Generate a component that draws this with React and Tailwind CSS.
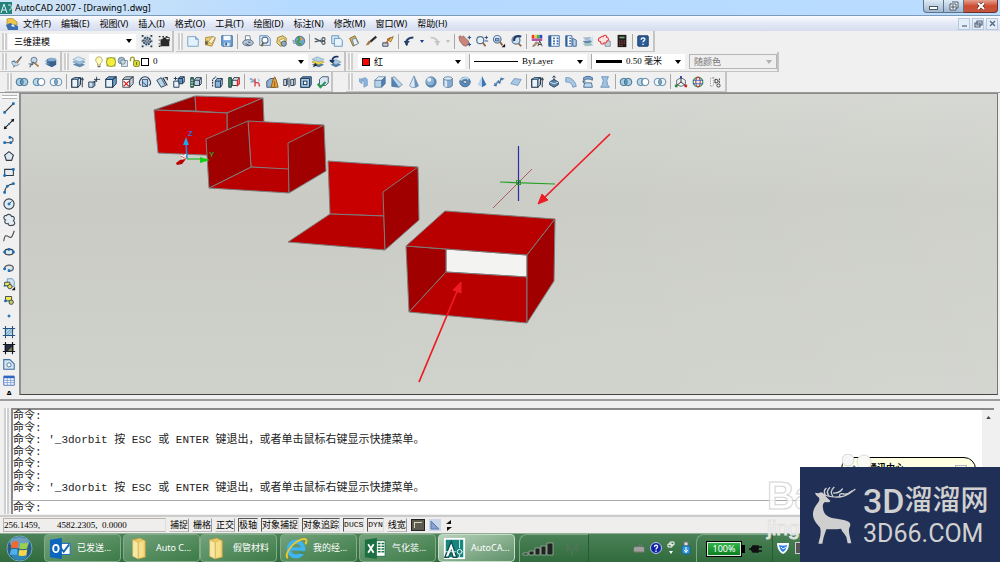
import React, { useState } from "react";

const ICONS = {
  // standard toolbar
  gear: (
    <>
      <rect x="1" y="1" width="14" height="14" fill="#dfe6ee" />
      <path d="M2 2h2M12 2h2M2 14h2M12 14h2M2 8h1M13 8h1" stroke="#333" strokeWidth="2" />
      <circle cx="8" cy="8" r="4" fill="#9fb4c8" stroke="#2c3e50" strokeWidth="2" strokeDasharray="2 1" />
      <circle cx="8" cy="8" r="1.5" fill="#fff" stroke="#2c3e50" />
    </>
  ),
  gearDark: (
    <>
      <path d="M2 3h2M6 3h2M10 3h2M2 7h1M2 11h1M2 14h2" stroke="#333" strokeWidth="1.5" />
      <path d="M4 6h2l1-2h3l1 2h3v8H4z" fill="#2a2a2a" />
      <path d="M10 4h4v4" stroke="#333" fill="none" />
    </>
  ),
  page: (
    <>
      <path d="M2 3h9l3 3v8H2z" fill="#e3f2fc" stroke="#6f9cc4" />
      <path d="M11 3v3h3" fill="#a9cbe6" stroke="#6f9cc4" />
    </>
  ),
  open: (
    <>
      <path d="M3 4l8-1 3 2-4 9-7-2z" fill="#f2cf6c" stroke="#a1803b" />
      <path d="M6 9l5-6 3 1-4 7z" fill="#fff3c4" stroke="#8c7b50" strokeWidth=".7" />
      <path d="M2 9l3-2 1 4-3 2z" fill="#7c6840" />
    </>
  ),
  save: (
    <>
      <path d="M2 2h12v12H3l-1-1z" fill="#6fa6dc" stroke="#355e90" />
      <path d="M4 2h8v5H4z" fill="#f6fbff" />
      <path d="M5 10h6v4H5z" fill="#dbe9f6" />
      <path d="M6 10h2v3H6z" fill="#355e90" />
    </>
  ),
  print: (
    <>
      <path d="M5 7V2h5l1 5" fill="#fff" stroke="#66798f" />
      <ellipse cx="8" cy="10" rx="6" ry="3.5" fill="#b8c8d9" stroke="#4d6078" />
      <path d="M5 11l5 2M8 9l3 1" stroke="#3d5069" />
    </>
  ),
  preview: (
    <>
      <path d="M2 2h9l3 3v8H2z" fill="#dfeefa" stroke="#5c84ae" />
      <circle cx="8" cy="7" r="3.5" fill="#fff" stroke="#557292" strokeWidth="1.3" />
      <path d="M6 10l-2 4" stroke="#8a5a2b" strokeWidth="2" />
    </>
  ),
  publish: (
    <>
      <path d="M3 4l6-2 4 3-1 7-6 2-4-4z" fill="#ecd27a" stroke="#927b36" />
      <path d="M5 7l5-2 2 4-5 2z" fill="#fff7d7" stroke="#927b36" strokeWidth=".7" />
      <circle cx="10" cy="11" r="3" fill="#95a7bb" stroke="#465b73" />
    </>
  ),
  globe: (
    <>
      <circle cx="9" cy="8" r="5.5" fill="#6aa5d2" stroke="#4c6c8a" />
      <path d="M6 4c3-1 3 3 1 4s1 4 4 4" stroke="#4a9b4f" strokeWidth="2.5" fill="none" />
      <path d="M9 3l4 3-3 2z" fill="#e5964a" />
      <path d="M1 7l4 3-3 1z" fill="#c9d7e4" stroke="#5b7590" strokeWidth=".7" />
    </>
  ),
  cut: (
    <>
      <path d="M2 5l8 4M2 9l8-2" stroke="#4c5a66" strokeWidth="1.4" />
      <circle cx="12" cy="6" r="1.8" fill="none" stroke="#4a5560" strokeWidth="1.3" />
      <circle cx="12" cy="10" r="1.8" fill="none" stroke="#4a5560" strokeWidth="1.3" />
    </>
  ),
  copy: (
    <>
      <path d="M2 2h8v9H2z" fill="#d6eaf8" stroke="#5c8fb6" />
      <path d="M5 5h7l2 2v7H5z" fill="#e9f5fd" stroke="#5c8fb6" />
    </>
  ),
  paste: (
    <>
      <path d="M3 5l6-3 4 8-6 4z" fill="#d9b45a" stroke="#7d642c" />
      <path d="M6 6l4-1 3 6-5 2z" fill="#eef6fc" stroke="#5f7f9c" />
    </>
  ),
  match: (
    <>
      <path d="M14 3l-7 6" stroke="#2b2b2b" strokeWidth="2.4" />
      <path d="M8 8l-2 4-4 1 3-5z" fill="#a27545" />
    </>
  ),
  block: (
    <>
      <path d="M7 6l7-3-3 6z" fill="#ffd84b" stroke="#7c6523" />
      <path d="M2 10h6v4H2z" fill="#c2cfdd" stroke="#33435a" />
      <path d="M5 11l6-7" stroke="#c2541d" strokeWidth="1.4" />
    </>
  ),
  undo: (
    <>
      <path d="M6 13C3 9 6 4 13 4" fill="none" stroke="#27426f" strokeWidth="2.4" />
      <path d="M2 8l7 0-4 5z" fill="#27426f" />
    </>
  ),
  redo: (
    <>
      <path d="M10 13c3-4 0-9-7-9" fill="none" stroke="#c7c7c7" strokeWidth="2" />
      <path d="M14 8l-7 0 4 5z" fill="#c7c7c7" />
    </>
  ),
  pan: (
    <>
      <path d="M1 3l2-1 2 2 1-2 2 2 1 1 3 3v4l-3 2-3-1-4-5z" fill="#c98579" stroke="#96594e" strokeWidth=".8" />
      <path d="M13 2v4M11 4h4M11 12h4M13 10v4" stroke="#30568f" strokeWidth="1.3" />
    </>
  ),
  zoomRt: (
    <>
      <circle cx="6" cy="7" r="4" fill="#e5f2fb" stroke="#577592" strokeWidth="1.4" />
      <path d="M9 10l3 4" stroke="#8c6235" strokeWidth="2" />
      <path d="M13 2v4M11 4h4M11 8h4" stroke="#24456f" />
    </>
  ),
  zoomWin: (
    <>
      <circle cx="6" cy="6" r="4.3" fill="#e5f2fb" stroke="#577592" strokeWidth="1.4" />
      <path d="M4 5h4v3H4z" fill="#8db4d8" stroke="#30568f" />
      <path d="M9 9l3 4" stroke="#8c6235" strokeWidth="2" />
      <path d="M15 11v4h-4z" fill="#111" />
    </>
  ),
  zoomPrev: (
    <>
      <circle cx="8" cy="7" r="4.5" fill="#cfe2f2" stroke="#577592" strokeWidth="1.4" />
      <path d="M14 3C9 1 5 4 6 8" stroke="#1d3666" strokeWidth="2.4" fill="none" />
      <path d="M11 11l3 3" stroke="#8c6235" strokeWidth="2" />
    </>
  ),
  props: (
    <>
      <path d="M2 1h3v4H2z" fill="#e33" />
      <path d="M5 1h3v4H5z" fill="#ec3" />
      <path d="M8 1h3v4H8z" fill="#3b5" />
      <path d="M11 1h3v4h-3z" fill="#34c" />
      <path d="M2 5h12v3H2z" fill="#b455a0" />
      <path d="M3 14l4-5 2 1-4 4z" fill="#d99e78" stroke="#6a4a33" strokeWidth=".7" />
      <path d="M9 14l2-6 3 6M10 12h3" stroke="#333" fill="none" />
    </>
  ),
  design: (
    <>
      <path d="M2 2h12v12H2z" fill="#fff" stroke="#2f5f9e" />
      <path d="M2 2h3v12H2z" fill="#2f5f9e" />
      <path d="M7 5h2M11 5h2M7 8h2M11 8h2M7 11h2M11 11h2" stroke="#3a6cae" strokeWidth="2" />
    </>
  ),
  palette: (
    <>
      <path d="M2 2h7v12H2z" fill="#fff" stroke="#2f5f9e" />
      <path d="M2 2h2v12H2z" fill="#2f5f9e" />
      <path d="M6 5h2M6 8h2M6 11h2" stroke="#3a6cae" strokeWidth="1.6" />
      <path d="M10 5l4 2v7h-4z" fill="#b7cbe0" stroke="#2f5f9e" />
    </>
  ),
  sheets: (
    <>
      <path d="M2 4l9-1 3 3-9 1z" fill="#a5bdd2" />
      <path d="M2 8l9-1 3 2-9 2z" fill="#5c88ae" />
      <path d="M2 11l9-1 3 3-9 1z" fill="#9fc3bd" />
      <path d="M10 4l4-2v11" fill="#d5e1ea" />
    </>
  ),
  markup: (
    <>
      <path d="M8 8h6v6H8z" fill="#c8d2dd" stroke="#7d8da1" />
      <path d="M3 4a2 2 0 013-1 2 2 0 014 1 2 2 0 010 4 2 2 0 01-3 2 2 2 0 01-4-1 2 2 0 010-5z" fill="#fbe3e3" stroke="#e23b3b" strokeWidth="1.2" />
    </>
  ),
  calc: (
    <>
      <path d="M3 1h10v14H3z" fill="#1c1c1c" />
      <path d="M5 3h6v2H5z" fill="#77a377" />
      <path d="M5 8h1M7.500 8h1M10 8h1M5 10.500h1M7.500 10.500h1M10 10.500h1M5 13h1M7.500 13h1" stroke="#e35b5b" strokeWidth="1.300" />
    </>
  ),
  help: (
    <>
      <rect x="2" y="2" width="12" height="12" rx="1" fill="#2a5c97" stroke="#16365f" />
      <path d="M6 6.500c0-3 4.500-2.500 4 0-.3 1.200-2 1.300-2 3M8 11v1.500" stroke="#fff" strokeWidth="1.600" fill="none" />
    </>
  ),
  // layers
  penTick: (
    <>
      <path d="M2 8l3-1 2 3 6-8" fill="none" stroke="#5f7fa2" strokeWidth="1.600" />
      <path d="M13 2l-6 9-3 3 1-4z" fill="#dd9b5c" stroke="#5a4634" strokeWidth=".6" />
      <path d="M2 8c0 5 6 6 9 2" fill="#c3d9ec" stroke="#5f7fa2" strokeWidth=".8" />
    </>
  ),
  walk: (
    <>
      <circle cx="8" cy="6" r="3.500" fill="#c4d7e7" stroke="#5d7388" />
      <path d="M3 14l4-6 6 5M2 10l5 1" stroke="#526475" fill="none" strokeWidth="1.300" />
      <path d="M9 9l4 4" stroke="#bb8446" strokeWidth="1.800" />
    </>
  ),
  cylinderDark: (
    <>
      <path d="M3 5l5-2 6 2v6l-5 3-6-3z" fill="#39628d" />
      <path d="M1 7h5M1 10h5" stroke="#7aa7cf" />
      <ellipse cx="9" cy="5" rx="5" ry="2" fill="#87acd0" />
    </>
  ),
  layers: (
    <>
      <path d="M1 11l6-3 8 3-6 3z" fill="#5c88ae" />
      <path d="M1 8l6-3 8 3-6 3z" fill="#9ec3de" stroke="#5b83a8" strokeWidth=".6" />
      <path d="M1 5l6-3 8 3-6 3z" fill="#d2e6f3" stroke="#7196b5" strokeWidth=".6" />
    </>
  ),
  layersY: (
    <>
      <path d="M1 11l6-3 8 3-6 3z" fill="#4f7ca6" />
      <path d="M1 8l6-3 8 3-6 3z" fill="#f4d84a" stroke="#a18a23" strokeWidth=".6" />
      <path d="M1 5l6-3 8 3-6 3z" fill="#b5d0e6" stroke="#7196b5" strokeWidth=".6" />
      <path d="M2 14l3-5 2 3z" fill="#222" />
    </>
  ),
  layersPrev: (
    <>
      <path d="M3 11l6-3 6 3-6 3z" fill="#4f7ca6" />
      <path d="M3 8l6-3 6 3-6 3z" fill="#a9c8de" stroke="#5b83a8" strokeWidth=".6" />
      <path d="M12 2C7 1 4 4 5 8L2 6M5 8l2-2" stroke="#1d3666" strokeWidth="2" fill="none" />
    </>
  ),
  bulb: (
    <>
      <path d="M8 1a4.500 4.500 0 00-2 8.500V12h4V9.500A4.500 4.500 0 008 1z" fill="#fffbbf" stroke="#a59a35" />
      <path d="M6 13h4v2H6z" fill="#666" />
    </>
  ),
  sun: (
    <>
      <path d="M2 2h12v12H2z" fill="#9fb24c" />
      <circle cx="8" cy="8" r="6" fill="#f5ee3b" stroke="#7f8a31" />
    </>
  ),
  sunVp: (
    <>
      <path d="M6 6h8v8H6z" fill="#dfe8ef" stroke="#6b8195" />
      <circle cx="6" cy="6" r="4.500" fill="#a5bccc" stroke="#5f7688" />
      <circle cx="8" cy="8" r="3" fill="#cfdbe4" stroke="#5f7688" />
    </>
  ),
  unlock: (
    <>
      <path d="M2 7V4a2.500 2.500 0 015 0v4" fill="none" stroke="#9a9a25" strokeWidth="1.800" />
      <rect x="6" y="6" width="8" height="8" rx="2" fill="#d6d83a" stroke="#78791d" />
      <path d="M10 8v4" stroke="#55560f" />
    </>
  ),
  // solids editing
  union: (
    <>
      <circle cx="5.500" cy="8" r="4.200" fill="#a9cde0" stroke="#35658c" />
      <circle cx="10.500" cy="8" r="4.200" fill="#a9cde0" stroke="#35658c" />
      <path d="M8 5a4 4 0 010 6 4 4 0 010-6" fill="#79aecb" stroke="#35658c" />
    </>
  ),
  subtract: (
    <>
      <circle cx="5.500" cy="8" r="4.200" fill="#b9d9ea" stroke="#45759b" />
      <circle cx="10.500" cy="8" r="4.200" fill="#fff" stroke="#45759b" />
      <path d="M8 5a4 4 0 000 6" fill="none" stroke="#45759b" />
    </>
  ),
  intersect: (
    <>
      <circle cx="5.500" cy="8" r="4.200" fill="#f2f7fa" stroke="#4f7fa4" />
      <circle cx="10.500" cy="8" r="4.200" fill="none" stroke="#4f7fa4" />
      <path d="M8 5a4 4 0 010 6 4 4 0 010-6" fill="#8fc0da" stroke="#4f7fa4" />
    </>
  ),
  extrude: (
    <>
      <path d="M2 5h7v9H2z" fill="#e9f3fb" stroke="#16283c" strokeWidth="1.300" />
      <path d="M2 5l3-2h7L9 5M9 14l3-3V3" fill="#7fb0d9" stroke="#16283c" />
      <path d="M14 14V4M12.500 6L14 3l1.500 3" stroke="#16283c" fill="none" />
    </>
  ),
  moveFace: (
    <>
      <path d="M2 8h5v6H2z" fill="#cfe0ee" stroke="#203449" />
      <path d="M7 8l2-1v5l-2 2" fill="#6e9fca" stroke="#203449" />
      <path d="M8 9l3-4M11 2v6M8 5h7" stroke="#203449" fill="none" />
    </>
  ),
  box: (
    <>
      <path d="M2 5h8v9H2z" fill="#e6f1fa" stroke="#19304a" strokeWidth="1.200" />
      <path d="M2 5l3-3h9l-4 3zM10 14V5l4-3v8z" fill="#6d9fcf" stroke="#19304a" />
    </>
  ),
  boxX: (
    <>
      <path d="M2 5h8v9H2z" fill="#fff" stroke="#35434f" />
      <path d="M2 5l3-3h9l-4 3zM10 14V5l4-3v8z" fill="#c2cfda" stroke="#35434f" />
      <path d="M3 7l6 6M9 7l-6 6" stroke="#d91f1f" strokeWidth="1.500" />
    </>
  ),
  boxRotate: (
    <>
      <path d="M5 5h6v8H5z" fill="#b6d2ea" stroke="#274766" />
      <path d="M3 5c2-4 8-4 10 0M3 12c-2-2-2-4 0-7M13 12c2-2 2-4 0-7" fill="none" stroke="#274766" strokeWidth="1.300" />
      <path d="M5 8l6 5" stroke="#274766" />
    </>
  ),
  taper: (
    <>
      <path d="M2 6l5-3 5 9-5 2z" fill="#b8d2e8" stroke="#22384d" />
      <path d="M9 3l5 9M11 3h3v3" stroke="#22384d" fill="none" strokeWidth="1.300" />
    </>
  ),
  copyFace: (
    <>
      <path d="M2 7h6v7H2z" fill="#e6f1fa" stroke="#19304a" />
      <path d="M7 4h5v6H8V7H7zM7 4l2-2h5l-2 2M12 10l2-2V2" fill="#6496c4" stroke="#19304a" />
      <path d="M2 4h4M4 2v4" stroke="#19304a" />
    </>
  ),
  colorFace: (
    <>
      <path d="M2 3h3v11H2z" fill="#2d9c55" stroke="#1c2d3e" />
      <path d="M6 6h6v6H6zM6 6l2-3h6l-2 3M12 12l2-2V3" fill="#bcd0e2" stroke="#1c2d3e" />
      <path d="M2 6h3M2 9h3M2 12h3" stroke="#fff" strokeWidth=".7" />
    </>
  ),
  copyEdge: (
    <>
      <path d="M6 7h6v7H6zM6 7l2-3h6l-2 3M12 14l2-3V4" fill="#8ab4dc" stroke="#19304a" />
      <path d="M3 13V5l4-3" stroke="#19304a" fill="none" strokeWidth="1.300" strokeDasharray="2 1" />
    </>
  ),
  colorEdge: (
    <>
      <path d="M2 3h3v11H2z" fill="#37a45d" stroke="#1c2d3e" />
      <path d="M6 6h6v6H6zM6 6l2-3h6l-2 3" fill="#e2ecf5" stroke="#1c2d3e" />
      <path d="M12 6v6l2-2V3" stroke="#dc2626" strokeWidth="1.500" fill="none" />
    </>
  ),
  imprint: (
    <>
      <path d="M2 4l6 3M3 8l5-1" stroke="#8aa9c8" strokeWidth="2" />
      <path d="M8 4v9M8 9c4-1 5 0 5 4" stroke="#d53c3c" strokeWidth="1.500" fill="none" />
      <path d="M11 3l3 3-2 2" fill="#a8c9e7" />
    </>
  ),
  clean: (
    <>
      <path d="M2 14V7l4-3h6v10z" fill="#93b1cc" stroke="#3b5671" />
      <path d="M7 14l2-8 2-4 2 4 2 8z" fill="#e8a23d" stroke="#865315" />
      <path d="M11 7v6" stroke="#865315" />
    </>
  ),
  separate: (
    <>
      <path d="M2 5h3v7H2zM5 12l1-1V4L5 5" fill="#dbe8f3" stroke="#1d2f42" />
      <path d="M10 5h3v7h-3zM13 12l2-1V4l-2 1" fill="#dbe8f3" stroke="#1d2f42" />
      <path d="M8 3v11" stroke="#1d2f42" />
    </>
  ),
  shell: (
    <>
      <path d="M2 4l2-2h10v9l-2 3H2z" fill="#5e93c4" stroke="#19304a" />
      <path d="M2 4h10v10H2z" fill="#a5c8e4" stroke="#19304a" />
      <rect x="5" y="7" width="4" height="4" fill="#eef6fc" stroke="#19304a" />
    </>
  ),
  check: (
    <>
      <path d="M4 5l3-3h7v7l-3 3H4z" fill="#d8e7f3" stroke="#35506b" />
      <path d="M2 10l3 4 6-6" stroke="#2b9954" strokeWidth="2.400" fill="none" />
    </>
  ),
  // modeling
  polysolid: <path d="M4 4l3 1v5L4 8zM7 4l4-1 2 2v7l-4 2V7L7 6z" fill="#8ab3dc" stroke="#6b94be" strokeWidth=".7" />,
  cube: (
    <>
      <path d="M2 6h8v8H2z" fill="#b7d0e6" stroke="#54779b" strokeWidth=".8" />
      <path d="M2 6l4-4h8l-4 4z" fill="#e0edf7" stroke="#54779b" strokeWidth=".8" />
      <path d="M10 14V6l4-4v8z" fill="#4c7fb2" stroke="#54779b" strokeWidth=".8" />
    </>
  ),
  wedge: (
    <>
      <path d="M2 13V3l8 11z" fill="#4f82b4" stroke="#54779b" strokeWidth=".8" />
      <path d="M2 3l3-1 9 9-4 3z" fill="#c0d7eb" stroke="#54779b" strokeWidth=".8" />
    </>
  ),
  cone: (
    <>
      <path d="M8 1l5 11c-1 3-9 3-10 0z" fill="#dceaf5" stroke="#5c7c9b" strokeWidth=".8" />
      <path d="M8 1l5 11c0 1-2 2-4 2z" fill="#6893bc" />
    </>
  ),
  sphere: (
    <>
      <circle cx="8" cy="8" r="6" fill="#5d8bb9" stroke="#44698f" strokeWidth=".6" />
      <circle cx="7" cy="7" r="4.500" fill="#8db1d3" />
      <circle cx="6" cy="5.500" r="2.300" fill="#e2eef8" />
    </>
  ),
  cyl: (
    <>
      <path d="M3 4v8c1 3 9 3 10 0V4z" fill="#86abd0" stroke="#44698f" strokeWidth=".8" />
      <path d="M4 5h3v9l-3-1z" fill="#d9e7f3" />
      <ellipse cx="8" cy="4" rx="5" ry="2" fill="#dceaf6" stroke="#44698f" strokeWidth=".8" />
    </>
  ),
  torus: (
    <>
      <ellipse cx="8" cy="8" rx="6" ry="5.500" fill="#5d8bb9" stroke="#44698f" />
      <path d="M3 6c2-3 7-4 9-1" stroke="#c7dcee" strokeWidth="2" fill="none" />
      <ellipse cx="8" cy="8" rx="2.500" ry="1.500" fill="#eef3f7" stroke="#33587e" />
    </>
  ),
  pyramid: (
    <>
      <path d="M8 1L3 11l5 3z" fill="#b9d5ed" />
      <path d="M8 1l5 10-5 3z" fill="#3d74ae" />
    </>
  ),
  helix: <path d="M2 12l3-1 1-3 3 1 1-4 4-1M3 9l2 4M7 6l2 4M10 3l2 3" stroke="#4577ad" strokeWidth="1.400" fill="none" />,
  plane: <path d="M6 4l8 1-4 7-8-2z" fill="#a9c6e2" stroke="#5f88b1" strokeWidth=".8" />,
  pressPull: (
    <>
      <path d="M8 1v5M3 8l5-3 5 3v3l-5 3-5-3z" fill="#5a83ac" stroke="#263f59" />
      <path d="M3 8l5 2 5-2" fill="none" stroke="#dbe9f5" />
      <path d="M6 3l2-2 2 2" stroke="#263f59" fill="none" />
    </>
  ),
  sweep: <path d="M2 3c6-1 11 4 12 10l-4 1C9 9 6 8 2 8z" fill="#a8c6e3" stroke="#5d86b0" strokeWidth=".8" />,
  revolve: (
    <>
      <path d="M3 3c3-2 7-2 10 0v3c-3-2-7-2-10 0z" fill="#84abd2" stroke="#3f6890" />
      <path d="M4 9h8l1 5H3z" fill="#c1d7ec" stroke="#3f6890" />
      <path d="M5 7l-3 0 2 3" fill="none" stroke="#1f4166" />
    </>
  ),
  loft: <path d="M4 2h8l-2 4 1 5 2 3H3l2-3 1-5z" fill="#9fc1e2" stroke="#6a92bb" />,
  ucs: (
    <>
      <path d="M3 6l5-3 5 3v5l-5 2-5-2z" fill="none" stroke="#58626c" />
      <path d="M8 8V2M8 8l-5 4M8 8l5 4" stroke="#222" />
      <path d="M7 1h2v3H7z" fill="#1f3fb0" />
      <path d="M1 11h3v3H1z" fill="#1b8f36" />
      <path d="M12 11h3v3h-3z" fill="#cc2222" />
    </>
  ),
  orbit: (
    <>
      <circle cx="8" cy="8" r="5.500" fill="none" stroke="#2a9657" strokeWidth="1.300" />
      <ellipse cx="8" cy="8" rx="2.500" ry="5.500" fill="none" stroke="#c93434" strokeWidth="1.200" />
      <path d="M2 6h12M2 10h12" stroke="#2d5fb7" />
    </>
  ),
  views: (
    <>
      <path d="M3 4l3-1v9l-3 1zM6 3h2" fill="#fff" stroke="#777" strokeDasharray="1 1" />
      <path d="M8 5h2c2 0 2 4 0 4H8z" fill="none" stroke="#222" />
      <circle cx="12" cy="12" r="1.800" fill="#fff" stroke="#222" />
      <path d="M13 4v5" stroke="#222" strokeDasharray="2 1" />
    </>
  ),
  // draw toolbar
  line: (
    <>
      <path d="M3 13L13 3" stroke="#333" strokeWidth="1.200" />
      <path d="M2 12h2v2H2zM12 2h2v2h-2z" fill="#1c6fb5" stroke="#1c6fb5" />
    </>
  ),
  xline: (
    <>
      <path d="M3 13L13 3" stroke="#222" strokeWidth="1.200" />
      <path d="M2 14l1-4 3 3zM14 2l-4 1 3 3z" fill="#111" />
      <path d="M7 7h2v2H7z" fill="#1c6fb5" />
    </>
  ),
  pline: (
    <>
      <path d="M3 11h7c4-1 3-6 0-6" stroke="#666" strokeWidth="1.400" fill="none" />
      <path d="M2 10h2v2H2zM9 10h2v2H9zM8 4h2v2H8z" fill="#1c6fb5" stroke="#1c6fb5" />
    </>
  ),
  polygon: <path d="M8 3l5 4-2 6H5L3 7z" fill="#dce8f2" stroke="#333b45" strokeWidth="1.300" />,
  rect: (
    <>
      <path d="M3 5h10v7H3z" fill="#e3edf5" stroke="#333b45" strokeWidth="1.200" />
      <path d="M2 11h2v2H2zM12 4h2v2h-2z" fill="#1c6fb5" stroke="#1c6fb5" />
    </>
  ),
  arc: (
    <>
      <path d="M3 13c0-5 4-9 10-10" stroke="#333" strokeWidth="1.300" fill="none" />
      <path d="M2 12h2v2H2zM5 5h2v2H5zM12 2h2v2h-2z" fill="#1c6fb5" stroke="#1c6fb5" />
    </>
  ),
  circle: (
    <>
      <circle cx="8" cy="8" r="5.800" fill="#e1ecf5" stroke="#3a4149" strokeWidth="1.300" />
      <path d="M8 8l3-3" stroke="#333" />
      <circle cx="8" cy="8" r="1.700" fill="#1c7fc5" />
    </>
  ),
  cloud: (
    <path
      d="M4 8C1 7 2 2 5 3c1-2 5-2 6 1 3-1 4 3 2 5 3 2 1 6-2 5-2 1-4 0-4-2-3 1-5-2-3-4z"
      fill="#e4eef6"
      stroke="#43494f"
      strokeWidth="1.300"
    />
  ),
  spline: <path d="M2 14c1-8 3-7 6-5s4-1 6-7" stroke="#444" strokeWidth="1.200" fill="none" />,
  ellipse: (
    <>
      <ellipse cx="8" cy="8" rx="5" ry="3.300" fill="#dbe9f4" stroke="#333" strokeWidth="1.300" />
      <path d="M2 7h2v2H2zM12 7h2v2h-2zM7 4h2v2H7z" fill="#1c6fb5" stroke="#1c6fb5" />
    </>
  ),
  ellArc: (
    <>
      <path d="M3 9c-1-5 10-6 10-1 0 3-4 4-5 3" stroke="#555" strokeWidth="1.400" fill="#dce7f0" />
      <path d="M2 8h2v2H2zM7 10h2v2H7z" fill="#1c6fb5" stroke="#1c6fb5" />
    </>
  ),
  insert: (
    <>
      <path d="M6 2h6l2 3v6H6z" fill="#cfe3f1" stroke="#6d94b5" />
      <path d="M3 6h6v4H3z" fill="#efe95a" stroke="#333b45" />
      <circle cx="9" cy="11" r="2.500" fill="#e6df50" stroke="#333b45" />
      <path d="M15 11v4h-4z" fill="#111" />
      <path d="M2 9h2v2H2z" fill="#1c6fb5" />
    </>
  ),
  makeBlock: (
    <>
      <path d="M4 4h7v5H4z" fill="#efe95a" stroke="#333b45" />
      <circle cx="10.500" cy="10.500" r="2.500" fill="#c5cf60" stroke="#333b45" />
      <path d="M3 8h2v2H3z" fill="#1c6fb5" stroke="#1c6fb5" />
    </>
  ),
  point: <path d="M7 7h2v2H7z" fill="#1c6fb5" stroke="#1c6fb5" />,
  hatch: (
    <>
      <path d="M3 4h10v8H3z" fill="#b9d5ea" />
      <path d="M3 12L11 4M6 12l7-7M3 8l4-4" stroke="#4d86b4" strokeWidth=".8" />
      <path d="M4 1v14M12 1v14M1 4h14M1 12h14" stroke="#26557f" strokeWidth="1.200" />
    </>
  ),
  gradient: (
    <>
      <path d="M3 4h10v8H3z" fill="#262c44" />
      <path d="M6 12l7-7v7z" fill="#8a8347" />
      <path d="M4 1v14M12 1v14M1 4h14M1 12h14" stroke="#14181f" strokeWidth="1.300" />
    </>
  ),
  region: (
    <>
      <path d="M2 3h7l5 5v6H2z" fill="#d4e5f3" stroke="#3d6d9c" strokeWidth="1.200" />
      <circle cx="8" cy="9" r="2.400" fill="#fff" stroke="#3d6d9c" />
    </>
  ),
  table: (
    <>
      <path d="M2 4h12v10H2z" fill="#fff" stroke="#3a66b0" />
      <path d="M2 3h12v3H2z" fill="#2f65c4" />
      <path d="M2 8.500h12M2 11h12M6 6v8M10 6v8" stroke="#7ba0d6" />
    </>
  ),
};

const STANDARD = ["page", "open", "save", "|", "print", "preview", "publish", "globe", "|", "cut", "copy", "paste", "match", "block", "|", "undo", "v", "redo", "w", "|", "pan", "zoomRt", "zoomWin", "zoomPrev", "|", "props", "design", "palette", "sheets", "markup", "calc", "|", "help"];
const SOLID_EDIT = ["union", "subtract", "intersect", "|", "extrude", "moveFace", "box", "boxX", "boxRotate", "taper", "copyFace", "colorFace", "|", "copyEdge", "colorEdge", "|", "imprint", "clean", "separate", "shell", "check"];
const MODELING = ["polysolid", "cube", "wedge", "cone", "sphere", "cyl", "torus", "pyramid", "helix", "plane", "|", "extrude", "pressPull", "sweep", "revolve", "loft", "|", "union", "subtract", "intersect", "|", "ucs", "orbit", "views"];
const DRAW = ["line", "xline", "pline", "polygon", "rect", "arc", "circle", "cloud", "spline", "ellipse", "ellArc", "insert", "makeBlock", "point", "hatch", "gradient", "region", "table"];

const MENUS = ["文件(F)", "编辑(E)", "视图(V)", "插入(I)", "格式(O)", "工具(T)", "绘图(D)", "标注(N)", "修改(M)", "窗口(W)", "帮助(H)"];

const ORBIT_LINE = "命令: '_3dorbit 按 ESC 或 ENTER 键退出，或者单击鼠标右键显示快捷菜单。";
const HISTORY = ["命令:", "命令:", ORBIT_LINE, "命令:", "命令:", "命令:", ORBIT_LINE];

const MODES = [
  { label: "捕捉", on: false },
  { label: "栅格", on: false },
  { label: "正交", on: false },
  { label: "极轴", on: true },
  { label: "对象捕捉", on: true },
  { label: "对象追踪", on: true },
  { label: "DUCS", on: true, mono: true },
  { label: "DYN", on: true, mono: true },
  { label: "线宽", on: false },
];

const Icon = ({ name, className = "h-[14px] w-[14px]" }) => (
  <svg viewBox="0 0 16 16" className={`flex-none ${className}`} aria-hidden="true">
    {ICONS[name]}
  </svg>
);

const Caret = ({ className = "text-black" }) => (
  <svg viewBox="0 0 6 4" className={`h-1 w-1.5 flex-none ${className}`} aria-hidden="true">
    <path d="M0 0h6L3 4z" fill="currentColor" />
  </svg>
);

const Grip = () => (
  <div className="mr-px ml-0.5 h-[17px] w-[5px] flex-none border-x-2 border-[#cfcfcf] bg-white" />
);

const ToolButton = ({ name }) => (
  <button aria-label={name} className="flex h-[17px] w-[17px] flex-none items-center justify-center hover:bg-sky-100">
    <Icon name={name} />
  </button>
);

const Tools = ({ items }) =>
  items.map((item, i) => {
    if (item === "|") {
      return (
        <div key={i} className="flex w-1 flex-none justify-center">
          <div className="h-[15px] w-px bg-[#a8a8a8]" />
        </div>
      );
    }
    if (item === "v" || item === "w") {
      return (
        <button key={i} aria-label="history" className="flex w-[9px] flex-none justify-center">
          <svg viewBox="0 0 4 3" className="h-[3px] w-1">
            <path d="M0 0h4L2 3z" fill={item === "v" ? "#1d3a8a" : "#bdbdbd"} />
          </svg>
        </button>
      );
    }
    return <ToolButton key={i} name={item} />;
  });

const Bar = ({ children, className = "" }) => (
  <div className={`flex h-full flex-none items-center border-r-2 border-b border-[#c4c4c4] ${className}`}>
    {children}
  </div>
);

const Combo = ({ label, value, children, className = "", disabled, selectClass = "" }) => (
  <label className={`flex h-[15px] flex-none items-center gap-1 px-1 ${disabled ? "border border-[#b5b5b5] bg-[#efefef]" : "bg-white"} ${className}`}>
    {children}
    <select
      aria-label={label}
      disabled={disabled}
      defaultValue={value}
      className={`min-w-0 flex-1 appearance-none bg-transparent text-[9px] leading-[15px] outline-none ${selectClass}`}
    >
      <option value={value}>{value}</option>
    </select>
    <Caret className={disabled ? "text-[#b0b0b0]" : "text-black"} />
  </label>
);

const Scene = () => (
  <svg viewBox="21 94 620 296" className="block h-[296px] w-[620px]" role="img" aria-label="三维模型">
    <g stroke="#7d7d7d" strokeWidth="1" strokeLinejoin="round">
      <path d="M154 110L195 96L196 111z" fill="#a00000" />
      <path d="M195 96L263 98L227 113L196 111z" fill="#c80000" />
      <path d="M227 113L263 98L264 122L227 131z" fill="#a00000" />
      <path d="M154 110L227 113V156L158 153z" fill="#c80000" />

      <path d="M248 121L324 125L289 170L251 167z" fill="#c80000" />
      <path d="M209 188L251 167L289 169V193z" fill="#b90000" />
      <path d="M206 139L248 121L251 167L209 188z" fill="#a00000" />
      <path d="M288 143L324 125L326 171L289 193z" fill="#a00000" />

      <path d="M328 161L418 167L384 216L330 214z" fill="#c80000" />
      <path d="M288 242L330 214L384 216L385 250z" fill="#b90000" />
      <path d="M383 192L418 167L419 220L385 250z" fill="#a00000" />

      <path d="M446 249L527 255V277L446 272z" fill="#f3f4f2" />
      <path d="M406 246L446 249V272L409 312z" fill="#a00000" />
      <path d="M409 312L446 272L527 277V323z" fill="#b90000" />
      <path d="M406 246L445 211L555 219L527 255z" fill="#b90000" />
      <path d="M527 255L555 219L554 281L527 323z" fill="#a00000" />
    </g>

    {/* UCS axes */}
    <path d="M187 159L186 143" stroke="#2288d8" strokeWidth="1.500" />
    <path d="M186 137l3 8h-6z" fill="#22a5ee" />
    <path d="M187 159h16" stroke="#22bb22" strokeWidth="1.200" />
    <path d="M200 157l10 3-10 3z" fill="#10d010" />
    <path d="M176 163l4-3 6-1-4 5-5 1z" fill="#b80000" />
    <path d="M181 155l5 4M186 154l-4 5" stroke="#fff" strokeWidth="1.200" />
    <path d="M181 156l5 3" stroke="#dd3030" strokeWidth=".8" />
    <text x="188" y="136" fill="#2f6ad8" className="font-['Liberation_Sans'] text-[8px] font-bold">Z</text>
    <text x="209" y="157" fill="#3e9a16" className="font-['Liberation_Sans'] text-[8px] font-bold">Y</text>

    {/* crosshair */}
    <path d="M493 208L532 169" stroke="#a85050" strokeWidth=".9" />
    <path d="M500 182L555 184" stroke="#22a022" strokeWidth="1.200" />
    <path d="M518.500 146v55" stroke="#2c2ca8" strokeWidth="1.200" />
    <rect x="516.500" y="180.500" width="4" height="4" fill="none" stroke="#22a022" />

    {/* annotation arrows */}
    <g stroke="#ed1c24" strokeWidth="1.700" fill="#ed1c24">
      <path d="M610 134L545 197" />
      <path d="M419 382L458 289" />
      <path d="M538 204l4-10 6 6zM461 282l-8 8 8 3z" strokeWidth="1" />
    </g>
  </svg>
);

const TASK_ICONS = {
  outlook: (
    <>
      <path d="M9 7h14v12H9z" fill="#fff" stroke="#1068b8" />
      <path d="M12 11l4 5 6-8" stroke="#1068b8" strokeWidth="2" fill="none" />
      <path d="M1 3l13-2v23L1 22z" fill="#0d66bd" />
      <ellipse cx="7.500" cy="12.500" rx="3" ry="4" fill="none" stroke="#fff" strokeWidth="2" />
    </>
  ),
  folder: (
    <>
      <path d="M5 3l8-2 6 3v18l-8 2z" fill="#e9c965" stroke="#b2913a" strokeWidth=".6" />
      <path d="M5 3l6 3v18l-6-3z" fill="#f8e8a5" stroke="#c9a84d" strokeWidth=".6" />
      <path d="M12 6l5-2v17l-5 2z" fill="#f7df8b" />
    </>
  ),
  ie: (
    <>
      <circle cx="12" cy="13" r="8" fill="none" stroke="#3fb4ef" strokeWidth="4.500" />
      <path d="M6 13h13" stroke="#3fb4ef" strokeWidth="3.500" />
      <path d="M16 17h6" stroke="#4d8c5a" strokeWidth="3" />
      <path d="M3 23c-5-4 7-20 18-21 3 0 3 3 1 6" stroke="#f2c72d" strokeWidth="2" fill="none" />
    </>
  ),
  excel: (
    <>
      <path d="M12 4h11v17H12z" fill="#fff" stroke="#1f7246" />
      <path d="M15 7h3M19 7h3M15 10h3M19 10h3M15 13h3M19 13h3M15 16h3M19 16h3" stroke="#1f7246" strokeWidth="1.500" />
      <path d="M1 3l13-2v23L1 22z" fill="#1b6f42" />
      <path d="M4.500 8l6 9M10.500 8l-6 9" stroke="#fff" strokeWidth="2" />
    </>
  ),
  cad: (
    <>
      <path d="M1 1h23v23H1z" fill="#fff" />
      <path d="M3 3h19v19H3z" fill="#16857f" />
      <path d="M2 22L9 5l6 17h-4l-2-7-3 7z" fill="#fff" stroke="#0c4d4b" strokeWidth="1.400" />
      <path d="M18 3v9M18 19v4M3 16h11M21 16h3" stroke="#d6efed" />
      <circle cx="18" cy="16" r="2.500" fill="#16857f" stroke="#fff" />
    </>
  ),
};

const TASKS = [
  { icon: "outlook", label: "已发送...", gap: "" },
  { icon: "folder", label: "Auto C...", gap: "ml-0.5" },
  { icon: "folder", label: "假管材料", gap: "" },
  { icon: "ie", label: "我的经...", gap: "ml-[3px]" },
  { icon: "excel", label: "气化装...", gap: "ml-0.5" },
  { icon: "cad", label: "AutoCA...", gap: "ml-0.5", active: true },
];

const Taskbar = () => (
  <footer className="flex h-[29px] items-stretch overflow-hidden border-t border-[#8fae95] bg-linear-to-b from-[#4b8257] to-[#306b3d] text-[9px] text-white">
    <button aria-label="开始" className="flex w-[44px] flex-none items-center justify-center pr-1.5">
      <svg viewBox="0 0 28 28" className="h-[27px] w-[27px]">
        <circle cx="14" cy="14" r="13" fill="#285d86" stroke="#77aebc" />
        <ellipse cx="14" cy="8" rx="10" ry="6" fill="#6b9fbd" />
        <ellipse cx="14" cy="21" rx="8" ry="5" fill="#2f86b4" />
        <path d="M6 8c3-2 5-2 7-1l-1 7c-2-1-4-1-7 0z" fill="#f06a30" />
        <path d="M15 8c2 1 5 1 8 0l-1 6c-3 1-6 1-8 0z" fill="#9bd04a" />
        <path d="M5 15c3-1 5-1 7 0l-1 6c-2-1-4-1-7 0z" fill="#4fb0ee" />
        <path d="M14 15c2 1 5 1 8 0l-1 6c-3 1-6 1-8 0z" fill="#fbd645" />
      </svg>
    </button>
    {TASKS.map((task, i) => (
      <button
        key={i}
        className={`flex w-[77px] flex-none items-center gap-[5px] rounded-sm border pl-1 ${task.gap} ${
          task.active
            ? "border-[#c5dcc9] bg-linear-to-br from-[#b9d3bd] to-[#5e9068]"
            : "border-[#82ab89] bg-linear-to-br from-[#73a27b] to-[#3b7b48]"
        }`}
      >
        <svg viewBox="0 0 25 25" className="h-[23px] w-[23px] flex-none" aria-hidden="true">
          {TASK_ICONS[task.icon]}
        </svg>
        <span className="whitespace-nowrap">{task.label}</span>
      </button>
    ))}
    <div className="ml-1 flex w-[70px] flex-none items-center gap-3 rounded-tl-lg border-t border-r border-l border-t-[#7fa486] border-r-[#285a34] border-l-[#7fa486] pl-0.5">
      <svg viewBox="0 0 32 14" className="h-[14px] w-8" aria-hidden="true">
        <path d="M1 11h5v2H1zM7 9h5v4H7zM13 6h5v7h-5zM19 4h5v9h-5zM25 1h6v12h-6z" fill="#222" stroke="#9fb8a4" strokeWidth=".8" />
      </svg>
      <svg viewBox="0 0 12 12" className="h-3 w-3" aria-hidden="true">
        <path d="M6 5v7M3 2v5M9 2v5M1 1v7M11 1v7" stroke="#5b7561" fill="none" />
      </svg>
    </div>
    <div className="ml-11 flex flex-none items-center gap-[5px]">
      <svg viewBox="0 0 12 12" className="h-3 w-3" aria-hidden="true">
        <path d="M1 5h10v5H1z" fill="#c8c8c4" stroke="#777" />
        <path d="M2 7h8M2 9h8M6 5V3h3" stroke="#777" fill="none" />
      </svg>
      <button aria-label="帮助">
        <svg viewBox="0 0 12 12" className="h-3 w-3">
          <circle cx="6" cy="6" r="5.500" fill="#1022a8" stroke="#b9c4e4" />
          <path d="M4.500 5c0-3 3.500-2 3 0-.3 1-1.500 1-1.500 2.500M6 8.500V10" stroke="#fff" strokeWidth="1.300" fill="none" />
        </svg>
      </button>
      <svg viewBox="0 0 8 14" className="h-[14px] w-2" aria-hidden="true">
        <path d="M3 1h4v3H3zM1 3h4v3H1z" fill="#3f7a4b" stroke="#fff" />
        <path d="M2 10h4l-2 3z" fill="#fff" />
      </svg>
      <svg viewBox="0 0 12 14" className="h-[14px] w-3" aria-hidden="true">
        <path d="M4 1h4v4H4z" fill="#ddd" stroke="#777" />
        <path d="M2 5h8v7l-2 1H4l-2-1z" fill="#2f9bdf" stroke="#1b639a" />
        <path d="M6 6v6M4 9l2 2 2-2" stroke="#fff" fill="none" />
      </svg>
    </div>
    <div className="ml-1 flex w-[77px] flex-none items-center gap-1 rounded-tl-lg border-t border-r border-l border-t-[#7fa486] border-r-[#285a34] border-l-[#7fa486] pl-2.5">
      <div className="flex items-center">
        <span className="flex h-[14px] w-[34px] items-center justify-center border border-[#dfe8df] bg-linear-to-b from-[#2fb44a] to-[#0a7f22] outline outline-black">100%</span>
        <span className="ml-px h-2 w-[3px] bg-black" />
      </div>
      <svg viewBox="0 0 14 10" className="h-2.5 w-[14px]" aria-hidden="true">
        <path d="M0 5h3M4 2h5v6H4l-2-3zM9 3h4M9 7h4" fill="#111" stroke="#111" strokeWidth="1.500" />
      </svg>
    </div>
    <div className="ml-1 flex flex-none items-center gap-1.5">
      <svg viewBox="0 0 12 12" className="h-3 w-3" aria-hidden="true">
        <path d="M0 1h12c0 5-2 9-6 11C2 10 0 6 0 1z" fill="#f4f8ff" />
        <path d="M2 3c3 1 5 1 8 0-1 4-2 6-4 7C4 9 3 7 2 3z" fill="#2b7ce8" />
        <path d="M4 5l2 2 3-2" stroke="#fff" fill="none" />
      </svg>
      <div className="h-3 w-3 border border-[#ccc] bg-[#555]" />
    </div>
  </footer>
);

const App = () => {
  const [command, setCommand] = useState("");

  return (
    <div className="relative flex min-h-screen flex-col overflow-hidden bg-[#f0f0f0] font-['Noto_Sans','Noto_Sans_CJK_SC',sans-serif] text-black">

      {/* Title bar */}
      <header className="flex h-4 items-center justify-between border-b border-[#7d9bb8] bg-linear-to-r from-[#d3e5f5] via-[#b5daff] via-30% to-[#b9dcff]">
        <div className="flex items-center gap-[3px]">
          <svg viewBox="0 0 12 12" className="h-3 w-3" aria-hidden="true">
            <path d="M0 0h12v12H0z" fill="#24817c" />
            <path d="M1 11l3-9 3 9M2 8h4M8 3h2c2 0 2 5-1 5" stroke="#d9efed" fill="none" />
          </svg>
          <h1 className="text-[9px] leading-[15px] whitespace-nowrap">AutoCAD 2007 - [Drawing1.dwg]</h1>
        </div>
        <div className="mr-0.5 flex h-full items-start">
          <button aria-label="最小化" className="flex h-[13px] w-[21px] items-end justify-center rounded-bl border border-t-0 border-[#5f7387] bg-linear-to-b from-[#dfeaf5] to-[#9fb8d1] pb-0.5">
            <span className="h-1 w-[9px] border border-[#4b5a68] bg-white" />
          </button>
          <button aria-label="还原" className="flex h-[13px] w-[20px] items-center justify-center border border-t-0 border-l-0 border-[#5f7387] bg-linear-to-b from-[#dfeaf5] to-[#9fb8d1]">
            <svg viewBox="0 0 10 10" className="h-2.5 w-2.5">
              <path d="M3 1h6v6H7M1 3h6v6H1zM3 5h2v2H3z" fill="#f4f4f4" stroke="#4b5a68" />
            </svg>
          </button>
          <button aria-label="关闭" className="flex h-[13px] w-[34px] items-center justify-center rounded-br border border-t-0 border-l-0 border-[#69302a] bg-linear-to-b from-[#e3a090] via-[#cd4a30] to-[#c4563f]">
            <svg viewBox="0 0 10 8" className="h-2 w-2.5">
              <path d="M2 1l6 6M8 1L2 7" stroke="#5b2b24" strokeWidth="3.200" />
              <path d="M2 1l6 6M8 1L2 7" stroke="#fff" strokeWidth="2" />
            </svg>
          </button>
        </div>
      </header>

      {/* Menu */}
      <nav className="flex h-[15px] items-center bg-linear-to-b from-[#fbfcfe] via-[#e3e9f6] to-[#d5dcee] pl-1.5 text-[9px] leading-[15px]">
        <svg viewBox="0 0 12 12" className="mr-[5px] h-3 w-3" aria-hidden="true">
          <path d="M1 1l5-1 5 4v3L1 8z" fill="#f0c849" stroke="#9a7b25" strokeWidth=".6" />
          <path d="M0 7l4-2 8 3v4H2z" fill="#3c6fae" />
          <path d="M5 8l2-2 2 3z" fill="#fff" />
        </svg>
        <div className="flex flex-1 gap-[10px]">
          {MENUS.map((m) => (
            <button key={m} className="whitespace-nowrap">{m}</button>
          ))}
        </div>
        <div className="mr-0.5 flex gap-0.5 text-[#50637a]">
          {["M2 7h5", "M3 2h5v4H3zM1 4h5v4H1z", "M2 2l5 5M7 2L2 7"].map((d, i) => (
            <button key={i} aria-label={["最小化文档", "还原文档", "关闭文档"][i]} className="flex h-3 w-3 items-center justify-center border border-[#b5c8dc] bg-[#e4eef8]">
              <svg viewBox="0 0 9 9" className="h-[9px] w-[9px]">
                <path d={d} fill="none" stroke="currentColor" strokeWidth="1.200" />
              </svg>
            </button>
          ))}
        </div>
      </nav>

      {/* Toolbars */}
      <div className="flex h-[21px]">
        <Bar>
          <Grip />
          <Combo label="工作空间" value="三维建模" className="mr-0.5 w-[128px] pl-1.5" />
          <ToolButton name="gear" />
          <ToolButton name="gearDark" />
        </Bar>
        <Bar className="ml-0.5 pr-0.5">
          <Grip />
          <Tools items={STANDARD} />
        </Bar>
      </div>
      <div className="flex h-[20px]">
        <Bar className="pr-px">
          <Grip />
          <Tools items={["penTick", "walk", "cylinderDark"]} />
        </Bar>
        <Bar className="pr-px">
          <Grip />
          <ToolButton name="layers" />
          <Combo label="图层" value="0" className="mr-px ml-0.5 w-[219px]" selectClass="font-['Liberation_Serif']">
            <div className="flex items-center">
              <Icon name="bulb" className="h-3 w-3" />
              <Icon name="sun" className="h-3 w-3" />
              <Icon name="sunVp" className="h-3 w-3" />
              <Icon name="unlock" className="h-3 w-3" />
              <span className="h-2 w-2 border border-black" />
            </div>
          </Combo>
          <ToolButton name="layersY" />
          <ToolButton name="layersPrev" />
        </Bar>
        <Bar className="gap-1">
          <Grip />
          <Combo label="颜色" value="红" className="w-[107px]">
            <span className="h-2 w-2 border border-black bg-[#f00]" />
          </Combo>
          <Combo label="线型" value="ByLayer" className="w-[118px] border-l border-[#a8a8a8]" selectClass="font-['Liberation_Serif']">
            <span className="h-px w-[44px] bg-black" />
          </Combo>
          <Combo label="线宽" value="0.50 毫米" className="w-[94px] border-l border-[#a8a8a8]" selectClass="font-['Liberation_Serif','Noto_Sans_CJK_SC',serif]">
            <span className="h-[3px] w-[26px] bg-black" />
          </Combo>
          <Combo label="打印样式" value="随颜色" className="w-[88px]" selectClass="text-[#777]" disabled />
        </Bar>
      </div>
      <div className="flex h-[21px] border-b border-[#9a9a9a] pl-[5px]">
        <Bar>
          <Grip />
          <Tools items={SOLID_EDIT} />
        </Bar>
        <Bar className="ml-[13px] pr-0.5">
          <Grip />
          <Tools items={MODELING} />
        </Bar>
      </div>

      {/* Drawing area */}
      <main className="flex flex-1 border-b-2 border-[#9c9c9c] pb-1">
        <div className="flex w-[19px] flex-none flex-col items-center pt-0.5 pr-px">
          <div className="mb-px h-1 w-[15px] flex-none border-y border-[#b5b5b5] bg-white" />
          {DRAW.map((name) => (
            <button key={name} aria-label={name} className="flex h-4 w-4 flex-none items-center justify-center">
              <Icon name={name} />
            </button>
          ))}
          <button aria-label="文字" className="h-[7px] overflow-hidden text-[9px] leading-[11px] font-bold">A</button>
        </div>
        <div className="mr-0.5 min-w-0 flex-1 overflow-hidden border-t border-r border-b border-l-2 border-t-[#8a8a8a] border-r-[#777] border-b-[#444] border-l-[#8f8f8f] bg-linear-to-b from-[#d2d4cf] via-[#c9cbc4] via-35% to-[#cfd1cb]">
          <div className="h-full bg-linear-to-r from-transparent via-transparent via-30% to-white/10">
            <Scene />
          </div>
        </div>
      </main>

      {/* Command window */}
      <section className="flex pt-[7px] pr-1.5 pb-px pl-1 font-['Liberation_Mono','Noto_Sans_CJK_SC',monospace] text-[11px] leading-3 text-[#222]">
        <div className="mr-0.5 w-[5px] border-x-2 border-[#cfcfcf] bg-white" />
        <div className="min-w-0 flex-1 border-t-2 border-l-2 border-[#8a8a8a] bg-white">
          <div className="flex">
            <div className="flex-1 pb-1.5">
              {HISTORY.map((text, i) => (
                <p key={i} className="h-3 whitespace-nowrap">{text}</p>
              ))}
            </div>
            <div className="flex w-3 justify-center bg-[#f0f0f0] pt-1.5">
              <svg viewBox="0 0 6 4" className="h-[3px] w-[5px]" aria-hidden="true">
                <path d="M0 4h6L3 0z" fill="#444" />
              </svg>
            </div>
          </div>
          <label className="flex h-[14px] items-center border-t border-[#aaa]">
            命令:
            <input value={command} onChange={(e) => setCommand(e.target.value)} className="ml-1.5 h-3 min-w-0 flex-1 bg-transparent outline-none" />
          </label>
        </div>
      </section>

      {/* Status bar */}
      <div className="flex h-[18px] items-center gap-[3px] border-t-2 border-[#cbcbcb] bg-[#f0eeec] pl-[3px] font-['Liberation_Serif','Noto_Sans_CJK_SC',serif] text-[9px] leading-3">
        <div className="flex h-[14px] w-[163px] items-center gap-[17px] border border-[#b8b4b2] border-r-[#dedede]">
          <span>256.1459,</span>
          <span>4582.2305,&nbsp; 0.0000</span>
        </div>
        {MODES.map(({ label, on, mono }) => (
          <button
            key={label}
            aria-pressed={on}
            className={`h-[14px] border whitespace-nowrap ${mono ? "font-['Liberation_Mono'] text-[8px]" : ""} ${
              on ? "border-t-[#555] border-r-[#ddd] border-b-[#ddd] border-l-[#555]" : "border-t-transparent border-r-[#999] border-b-[#bbb] border-l-transparent"
            }`}
          >
            {label}
          </button>
        ))}
        <button aria-label="模型" className="ml-px flex h-3 w-[14px] items-center justify-center border border-[#222] bg-[#5b5b50]">
          <span className="h-1.5 w-2 border-t border-l border-[#d8d8c0]" />
        </button>
        <button aria-label="布局" className="ml-px flex h-3 w-3 items-center justify-center bg-[#c9d6ea]">
          <svg viewBox="0 0 10 10" className="h-2.5 w-2.5">
            <path d="M1 1v8h8z" fill="#86a3cf" stroke="#5a7bb0" />
          </svg>
        </button>
        <button aria-label="切换布局" className="ml-0.5">
          <svg viewBox="0 0 6 11" className="h-[11px] w-1.5">
            <path d="M0 4h5V0zM1 7h5l-5 4z" fill="#111" />
          </svg>
        </button>
      </div>

      <Taskbar />

      {/* Communication center balloon */}
      <div className="absolute right-6 bottom-[80px] flex h-[25px] w-[135px] items-start justify-between rounded-t-xl border border-black bg-[#ffffe1] px-2 pt-[3px] text-[9px] leading-[14px] font-bold">
        <span className="pl-[18px]">通讯中心</span>
        <span className="mt-1 h-3 w-3 border border-[#b7b7bd] bg-[#f5f5e8]" />
        <svg viewBox="0 0 32 16" className="absolute -top-1 left-0 h-4 w-8" aria-hidden="true">
          <path d="M8 16l4-5 5 5z" fill="#5a7fd0" />
          <circle cx="6" cy="6" r="6" fill="#f6f6f6" stroke="#d4d4d4" />
          <circle cx="22" cy="8" r="7" fill="#f8f8f4" stroke="#dcdcdc" />
        </svg>
      </div>

      {/* Watermark */}
      <div className="absolute right-[180px] bottom-[22px] w-[53px] font-['Liberation_Sans',sans-serif] text-white/80">
        <p className="text-[38px] leading-[40px] font-bold [-webkit-text-stroke:1px_#d4d4d4]">Ba</p>
        <p className="text-[21px] leading-[24px] [-webkit-text-stroke:1px_#dfdfdf]">jing</p>
      </div>
      <aside className="absolute right-0 bottom-0 flex h-[95px] w-[200px] items-center gap-1.5 bg-[#202f55] pl-3 text-[#d0d0d0]">
        <svg viewBox="215 268 135 180" className="h-[60px] w-[45px] flex-none" aria-hidden="true">
          <path
            d="M224 291L234 293L242 290C248 290 254 297 257 303L270 315C270 319 262 321 255 319C249 321 246 328 248 338C250 354 258 362 275 367C295 371 312 372 322 377C330 381 332 388 328 394C324 402 326 410 328 420L333 443H322L318 424C314 414 306 410 302 399C286 402 272 400 258 401L250 424L246 444H234L240 421C241 410 242 402 238 394C228 383 219 373 218 358C217 342 226 330 235 318C238 312 238 308 234 304C229 301 226 297 224 291z"
            fill="#cfcfcf"
          />
          <path
            d="M252 298C270 306 285 304 298 304C318 303 330 292 344 281M256 299C250 291 251 284 257 278M266 301C258 290 261 282 268 276M278 303C270 292 272 283 281 275M280 292C290 293 300 288 306 280M300 303C294 297 300 292 310 295C320 298 328 291 334 286"
            fill="none"
            stroke="#cfcfcf"
            strokeWidth="4"
            strokeLinecap="round"
          />
        </svg>
        <div className="font-['Roboto','Noto_Sans_CJK_SC',sans-serif]">
          <p className="flex items-center text-[28px] leading-[38px] font-medium whitespace-nowrap">
            <span className="text-[34px]">3D</span>溜溜网
          </p>
          <p className="text-[25px] leading-[28px]">3D66.COM</p>
        </div>
      </aside>
    </div>
  );
};

export default App;
